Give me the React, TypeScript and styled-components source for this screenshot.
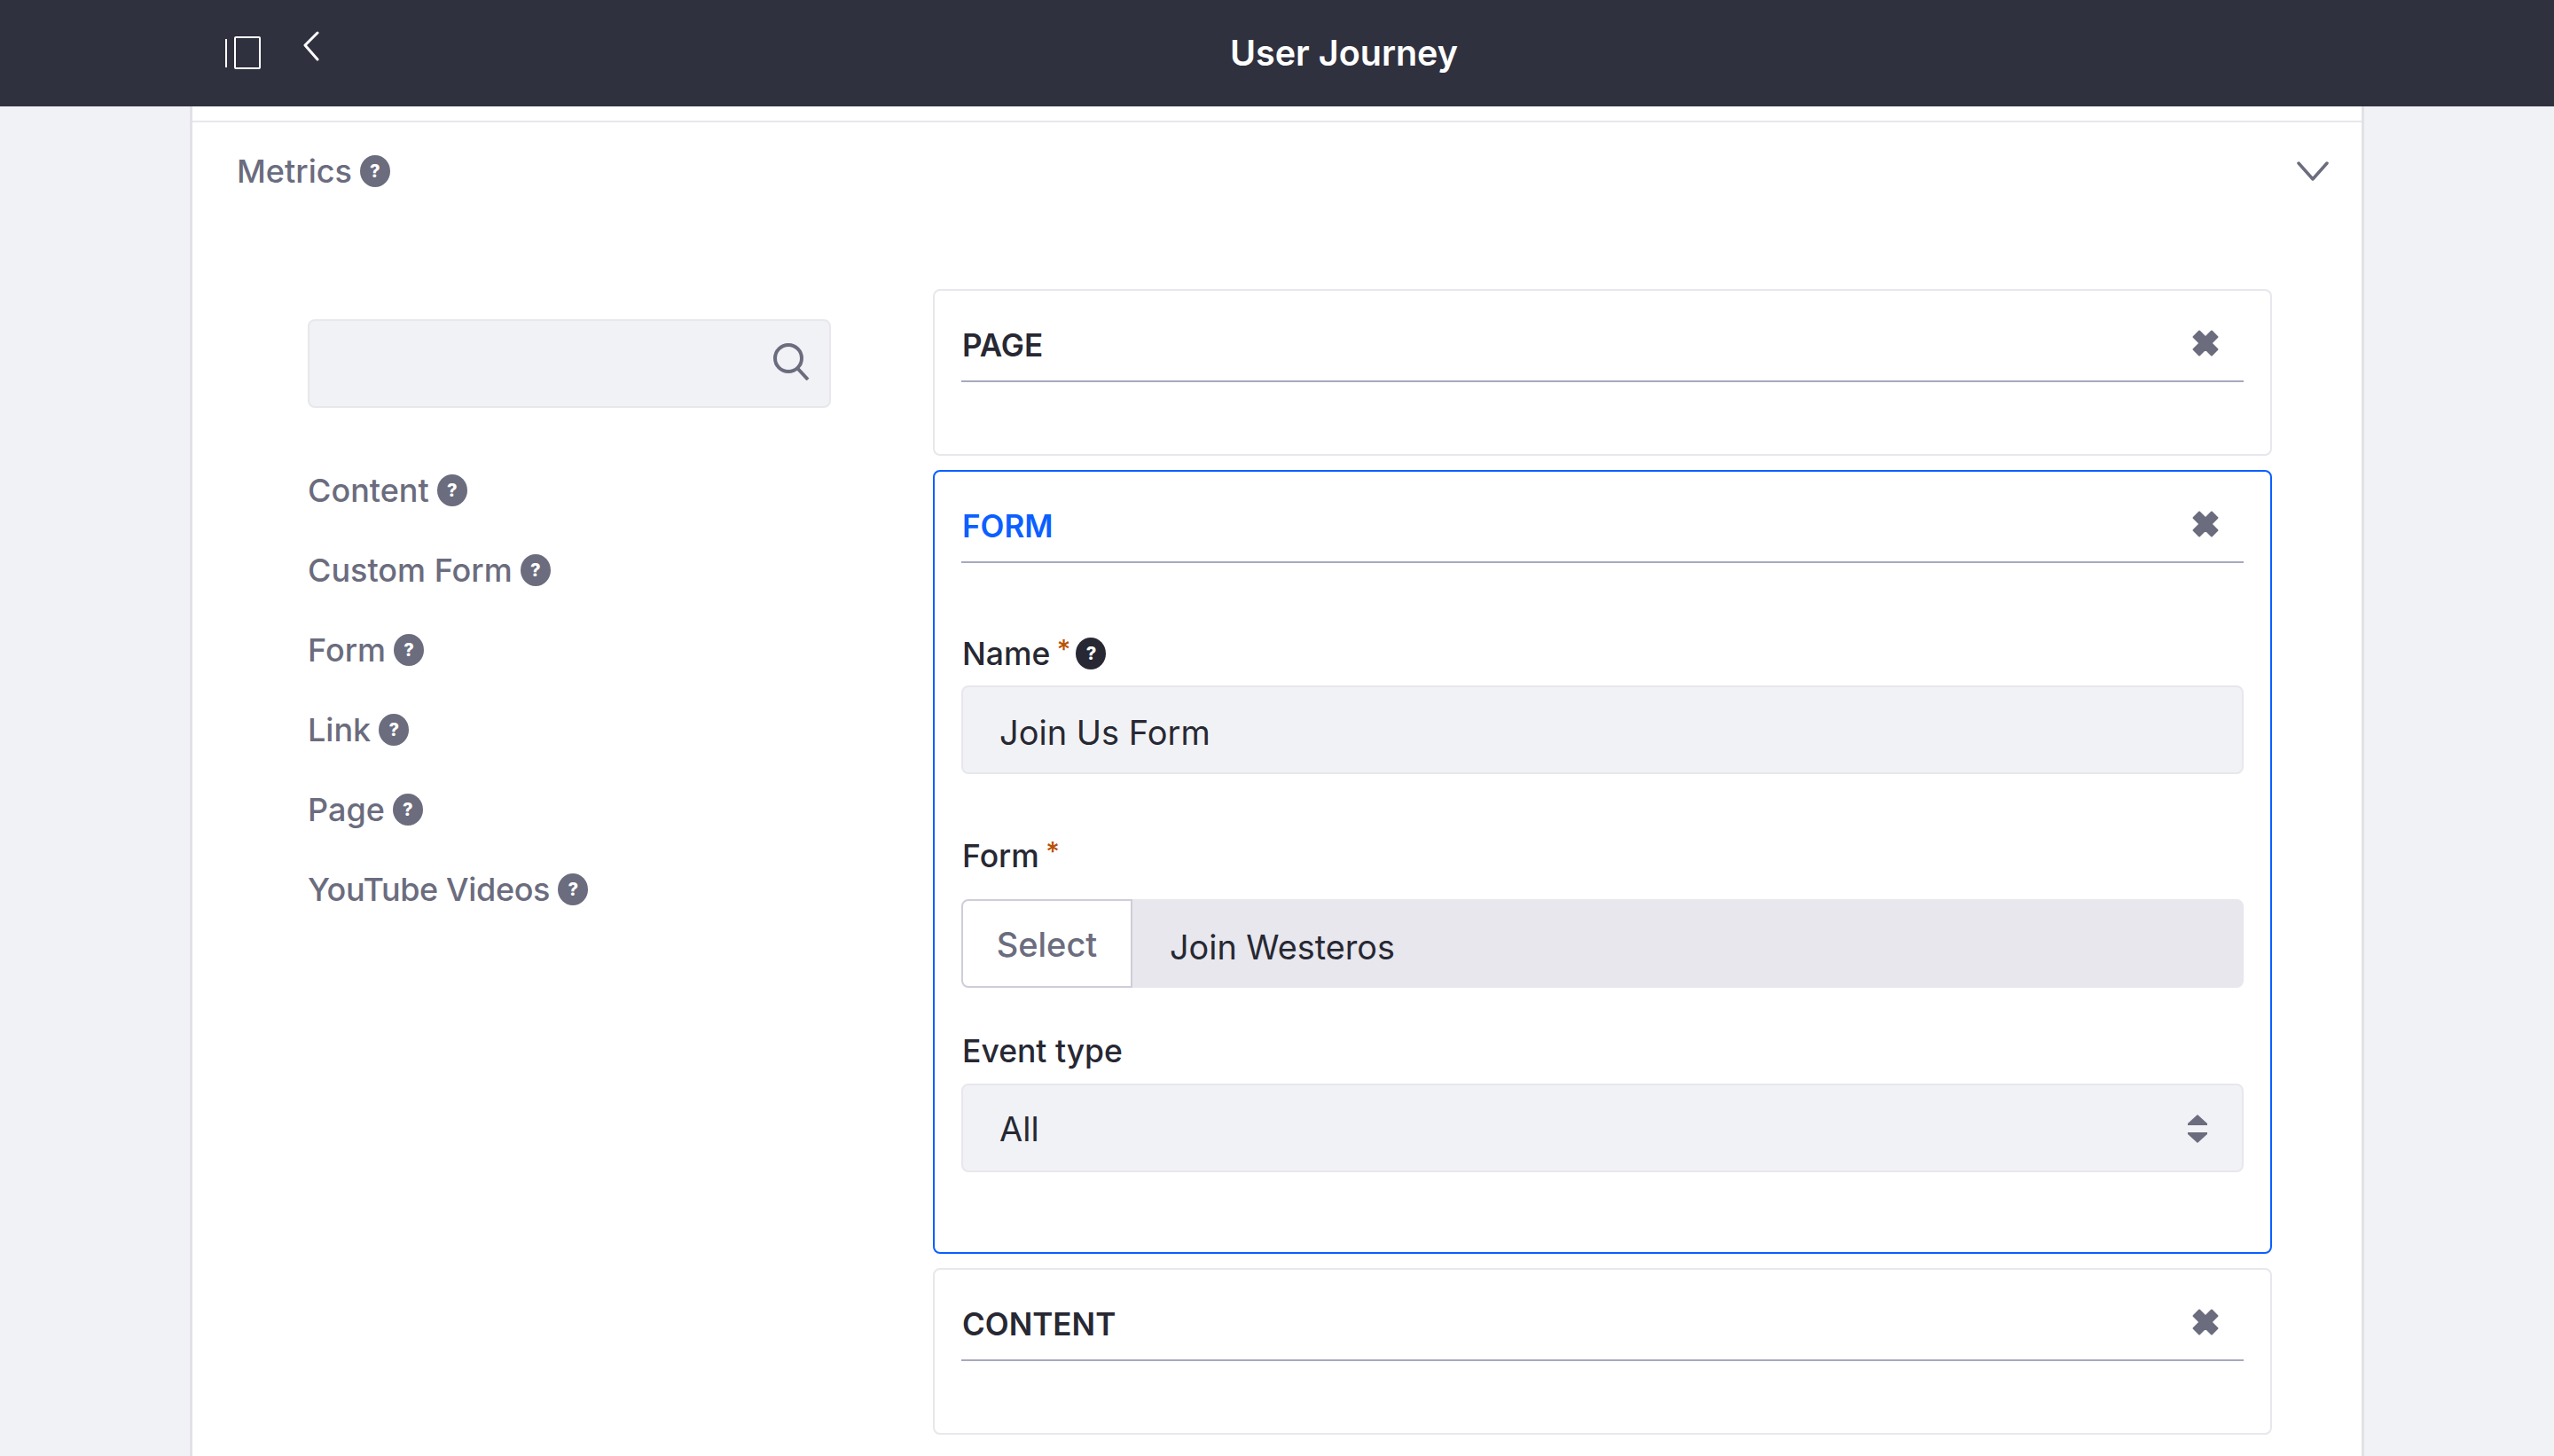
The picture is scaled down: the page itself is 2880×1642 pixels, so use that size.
import styled, { createGlobalStyle } from 'styled-components';

const GlobalStyle = createGlobalStyle`
  html, body {
    margin: 0;
    padding: 0;
    background: #f1f2f5;
    font-family: Inter, "Noto Sans", sans-serif;
    color: #272833;
  }
`;

const Page = styled.div`
  width: 2880px;
  height: 1642px;
  overflow: hidden;
  display: flex;
  flex-direction: column;
`;

const Header = styled.header`
  flex: none;
  height: 120px;
  padding-left: 254px;
  box-sizing: border-box;
  display: flex;
  align-items: center;
  background: #30313f;
`;

const BackIcon = styled.svg`
  margin: 0 0 16px 48px;
`;

const Title = styled.h1`
  margin: 0 0 0 1027px;
  font-size: 39.5px;
  font-weight: 600;
  color: #fff;
  white-space: nowrap;
`;

const Panel = styled.main`
  flex: 1;
  margin-left: 214px;
  width: 2452px;
  box-sizing: border-box;
  background: #fff;
  border-left: 3px solid #e1e1e7;
  border-right: 3px solid #e1e1e7;
  padding-top: 16px;
`;

const MetricsRow = styled.div`
  height: 110px;
  padding: 0 37px 0 50px;
  border-top: 2px solid #e7e7ed;
  display: flex;
  align-items: center;
  justify-content: space-between;
`;

const MetricsTitle = styled.div`
  display: flex;
  align-items: center;
  gap: 9px;
  font-size: 36px;
  font-weight: 500;
  color: #6b6c7e;
`;

const Help = styled.span<{ $dark?: boolean }>`
  flex: none;
  width: 34px;
  height: 36px;
  border-radius: 50%;
  display: inline-flex;
  align-items: center;
  justify-content: center;
  background: ${props => (props.$dark ? '#272833' : '#6b6c7e')};
  color: #fff;
  font-size: 20px;
  font-weight: 800;
`;

const Columns = styled.div`
  margin-top: 78px;
  padding-left: 130px;
  display: flex;
  gap: 115px;
`;

const Sidebar = styled.aside`
  flex: none;
  width: 590px;
  padding-top: 34px;
`;

const SearchBox = styled.div`
  height: 100px;
  box-sizing: border-box;
  padding: 0 22px 4px 0;
  border: 2px solid #e7e7ed;
  border-radius: 8px;
  background: #f1f2f5;
  display: flex;
  align-items: center;
  justify-content: flex-end;
`;

const SourceList = styled.ul`
  list-style: none;
  margin: 71px 0 0;
  padding: 0;
  display: flex;
  flex-direction: column;
  gap: 46px;
`;

const SourceItem = styled.li<{ $tight?: boolean }>`
  height: 44px;
  display: flex;
  align-items: center;
  gap: 9px;
  font-size: 36px;
  font-weight: 500;
  letter-spacing: ${props => (props.$tight ? '-0.36px' : '0')};
  color: #6b6c7e;
`;

const Cards = styled.section`
  flex: none;
  width: 1510px;
  display: flex;
  flex-direction: column;
  gap: 16px;
`;

const Card = styled.article<{ $active?: boolean }>`
  box-sizing: border-box;
  min-height: 188px;
  padding: 0 30px;
  border: 2px solid ${props => (props.$active ? '#0b5fff' : '#e7e7ed')};
  border-radius: 8px;
  background: #fff;
`;

const CardHeader = styled.div`
  height: 103px;
  box-sizing: border-box;
  padding: 16px 28px 0 1px;
  border-bottom: 2px solid #a7a9bc;
  display: flex;
  align-items: center;
  justify-content: space-between;
`;

const CardTitle = styled.h2<{ $active?: boolean }>`
  margin: 5px 0 0;
  font-size: 35px;
  font-weight: 600;
  color: ${props => (props.$active ? '#0b5fff' : '#272833')};
`;

const CardBody = styled.div`
  padding: 80px 0 90px;
`;

const Label = styled.label<{ $top?: number; $gap: number }>`
  height: 44px;
  padding-left: 1px;
  margin-top: ${props => props.$top ?? 0}px;
  margin-bottom: ${props => props.$gap}px;
  display: flex;
  align-items: center;
  gap: 6px;
  font-size: 35.5px;
  font-weight: 550;
  color: #272833;
`;

const Required = styled.span`
  margin-left: -2px;
  color: #b95000;
  font-size: 30px;
  line-height: 0;
  vertical-align: 7px;
`;

const TextInput = styled.input`
  display: block;
  width: 100%;
  height: 100px;
  box-sizing: border-box;
  padding: 6px 41px 0;
  border: 2px solid #e7e7ed;
  border-radius: 8px;
  outline: none;
  background: #f1f2f5;
  font: 400 38px Inter, "Noto Sans", sans-serif;
  color: #272833;
`;

const InputGroup = styled.div`
  height: 100px;
  display: flex;
`;

const SelectButton = styled.button`
  flex: none;
  width: 193px;
  box-sizing: border-box;
  padding: 1px 0 0;
  border: 2px solid #cdced9;
  border-radius: 8px 0 0 8px;
  background: #fff;
  font: 500 38px Inter, "Noto Sans", sans-serif;
  color: #6b6c7e;
`;

const SelectedValue = styled.div`
  flex: 1;
  padding: 7px 42px 0;
  border-radius: 0 8px 8px 0;
  background: #e7e7ed;
  display: flex;
  align-items: center;
  font-size: 37.8px;
  color: #272833;
`;

const SelectBox = styled.div`
  height: 100px;
  box-sizing: border-box;
  padding: 2px 38px 0 41px;
  border: 2px solid #e7e7ed;
  border-radius: 8px;
  background: #f1f2f5;
  display: flex;
  align-items: center;
  justify-content: space-between;
  font-size: 38px;
  color: #272833;
`;

const SideToggleIcon = () => (
  <svg width="40" height="38" viewBox="0 0 40 38" fill="none" stroke="#fff" strokeWidth="2">
    <path d="M1 3V35" />
    <rect x="11" y="1" width="28" height="35" rx="1" />
  </svg>
);

const TimesIcon = () => (
  <svg width="30" height="30" viewBox="0 0 28 28" fill="#6b6c7e" stroke="#6b6c7e" strokeWidth="2" strokeLinejoin="round">
    <path d="M1.5 7.5 7.5 1.5 14 8 20.5 1.5 26.5 7.5 20 14 26.5 20.5 20.5 26.5 14 20 7.5 26.5 1.5 20.5 8 14Z" />
  </svg>
);

const sources = ['Content', 'Custom Form', 'Form', 'Link', 'Page', 'YouTube Videos'];

function App() {
  return (
    <Page>
      <GlobalStyle />
      <Header>
        <SideToggleIcon />
        <BackIcon width="18" height="34" viewBox="0 0 18 34" fill="none" stroke="#fff" strokeWidth="3" strokeLinecap="round" strokeLinejoin="round">
          <path d="M16 2 2 16 16 32" />
        </BackIcon>
        <Title>User Journey</Title>
      </Header>
      <Panel>
        <MetricsRow>
          <MetricsTitle>
            Metrics <Help>?</Help>
          </MetricsTitle>
          <svg width="36" height="22" viewBox="0 0 36 22" fill="none" stroke="#6b6c7e" strokeWidth="3.5" strokeLinecap="round" strokeLinejoin="round">
            <path d="M2 2 18 20 34 2" />
          </svg>
        </MetricsRow>
        <Columns>
          <Sidebar>
            <SearchBox>
              <svg width="42" height="42" viewBox="0 0 42 42" fill="none" stroke="#6b6c7e" strokeWidth="4">
                <circle cx="18" cy="17" r="15" />
                <path d="M28 28 40 41" />
              </svg>
            </SearchBox>
            <SourceList>
              {sources.map(source => (
                <SourceItem key={source} $tight={source === 'YouTube Videos'}>
                  {source} <Help>?</Help>
                </SourceItem>
              ))}
            </SourceList>
          </Sidebar>
          <Cards>
            <Card>
              <CardHeader>
                <CardTitle>PAGE</CardTitle>
                <TimesIcon />
              </CardHeader>
            </Card>
            <Card $active>
              <CardHeader>
                <CardTitle $active>FORM</CardTitle>
                <TimesIcon />
              </CardHeader>
              <CardBody>
                <Label $gap={14}>
                  <span>Name <Required>*</Required></span>
                  <Help $dark>?</Help>
                </Label>
                <TextInput readOnly value="Join Us Form" />
                <Label $top={70} $gap={27}>
                  <span>Form <Required>*</Required></span>
                </Label>
                <InputGroup>
                  <SelectButton>Select</SelectButton>
                  <SelectedValue>Join Westeros</SelectedValue>
                </InputGroup>
                <Label $top={49} $gap={15}>Event type</Label>
                <SelectBox>
                  All
                  <svg width="24" height="34" viewBox="0 0 24 34" fill="#6b6c7e">
                    <path d="M12 1 23 11V13H1V11Z" />
                    <path d="M1 21H23V23L12 33 1 23Z" />
                  </svg>
                </SelectBox>
              </CardBody>
            </Card>
            <Card>
              <CardHeader>
                <CardTitle>CONTENT</CardTitle>
                <TimesIcon />
              </CardHeader>
            </Card>
          </Cards>
        </Columns>
      </Panel>
    </Page>
  );
}

export default App;
